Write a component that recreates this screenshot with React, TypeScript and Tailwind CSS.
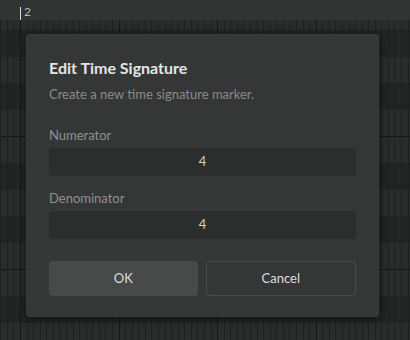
import React from "react";

const ROWS: { dark: boolean; h: string; line?: boolean }[] = [
  { dark: false, h: "h-[10px]" },
  { dark: true, h: "h-[26.6px]" },
  { dark: false, h: "h-[26.6px]" },
  { dark: true, h: "h-[26.6px]" },
  { dark: false, h: "h-[26.6px]" },
  { dark: false, h: "h-[26.6px]", line: true },
  { dark: true, h: "h-[26.6px]" },
  { dark: false, h: "h-[26.6px]" },
  { dark: true, h: "h-[26.6px]" },
  { dark: false, h: "h-[26.6px]" },
  { dark: false, h: "h-[26.6px]", line: true },
  { dark: true, h: "h-[26.6px]" },
  { dark: false, h: "h-[26.6px]" },
];

// grid lines of the piano roll: 15 steps per bar, bar starts at x=20
const STEP = 6.57;
const lines: { x: number; bar: boolean }[] = [];
for (let k = -3; 20 + k * STEP < 412; k++) {
  lines.push({ x: Math.round(20 + k * STEP) + 0.5, bar: k % 15 === 0 });
}

function GridLines() {
  return (
    <svg className="absolute inset-0" width="410" height="320">
      {lines.map((l) => (
        <line
          key={l.x}
          x1={l.x}
          x2={l.x}
          y1={0}
          y2={320}
          stroke={l.bar ? "#151616" : "#1f2020"}
          strokeWidth={1}
        />
      ))}
    </svg>
  );
}

function Field({ label, value }: { label: string; value: string }) {
  return (
    <div className="flex flex-col gap-1">
      <span className="text-[13px] leading-[18px] text-[#8f9190]">{label}</span>
      <div className="h-[28px] rounded-[3px] bg-[#2c2d2d] flex items-center justify-center text-[13px] text-[#cfd0cf]">
        {value}
      </div>
    </div>
  );
}

export default function App() {
  return (
    <div className="relative w-[410px] h-[340px] overflow-hidden bg-[#2b2c2c] font-['Lato',sans-serif]">
      {/* Ruler */}
      <div className="relative h-5 bg-[#323433]">
        <div className="absolute left-5 top-[7px] h-[13px] w-px bg-[#d8d8d8]" />
        <span className="absolute left-[24px] top-[4px] text-[12px] leading-[16px] text-[#b8b9b8]">2</span>
      </div>

      {/* Piano roll grid */}
      <div className="relative h-[320px]">
        <div className="flex flex-col">
          {ROWS.map((r, i) => (
            <div
              key={i}
              className={`${r.h} shrink-0 ${r.dark ? "bg-[#232424]" : "bg-[#2b2c2c]"} ${r.line ? "border-t border-[#161717]" : ""}`}
            />
          ))}
        </div>
        <GridLines />
      </div>

      {/* Dialog */}
      <div className="absolute left-[26px] top-[34px] w-[353px] h-[283px] rounded-[3px] border border-[#3b3d3c] bg-[#353736] shadow-[0_2px_10px_rgba(0,0,0,0.55)] px-[22px] pt-[23px]">
        <h2 className="text-[16px] leading-[20px] font-bold text-[#e4e5e4]">Edit Time Signature</h2>
        <p className="mt-[7px] text-[13px] leading-[18px] text-[#8a8c8b]">Create a new time signature marker.</p>

        <div className="mt-[23px] flex flex-col gap-[13px]">
          <Field label="Numerator" value="4" />
          <Field label="Denominator" value="4" />
        </div>

        <div className="mt-[22px] flex gap-2">
          <button className="flex-1 h-[35px] rounded-[4px] bg-[#484a49] text-[13px] text-[#dcdddc]">OK</button>
          <button className="flex-1 h-[35px] rounded-[4px] border border-[#4a4c4b] text-[13px] text-[#dcdddc]">Cancel</button>
        </div>
      </div>
    </div>
  );
}
